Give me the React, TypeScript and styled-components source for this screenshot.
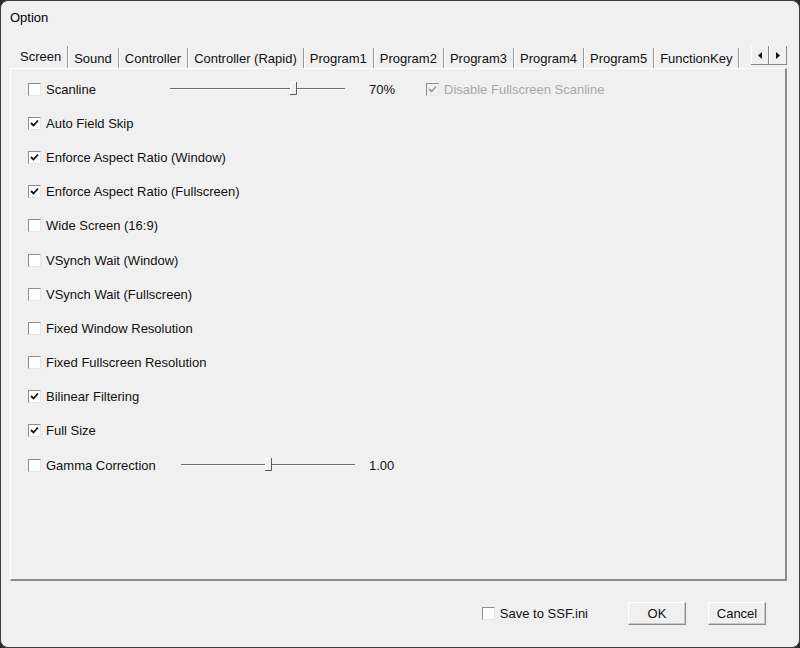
import styled, { createGlobalStyle } from "styled-components";

const GlobalStyle = createGlobalStyle`
  html, body {
    margin: 0;
    padding: 0;
    background: #2a2a2a;
  }
  * {
    box-sizing: border-box;
  }
`;

const Window = styled.div`
  width: 800px;
  height: 648px;
  background: #f0f0f0;
  border: 1px solid #3c3c3c;
  border-radius: 8px;
  display: flex;
  flex-direction: column;
  overflow: hidden;
  font-family: "Liberation Sans", Arial, sans-serif;
  font-size: 13px;
  color: #111;
`;

const TitleBar = styled.div`
  height: 33px;
  display: flex;
  align-items: center;
  padding-left: 9px;
  font-size: 13px;
  color: #000;
`;

const TabStrip = styled.div`
  height: 22px;
  margin-top: 12px;
  display: flex;
  align-items: flex-end;
  padding-left: 13px;
  padding-right: 12px;
`;

const Tab = styled.div<{ $active?: boolean }>`
  height: ${(p) => (p.$active ? "22px" : "20px")};
  padding: 0 6px;
  display: flex;
  align-items: center;
  padding-bottom: ${(p) => (p.$active ? "2px" : "0")};
  border-right: 1px solid #9a9a9a;
  box-shadow: 1px 0 0 #ffffff;
  white-space: nowrap;
  color: #111;
`;

const ScrollArrows = styled.div`
  margin-left: auto;
  display: flex;
  height: 19px;
  align-self: flex-start;
  border-bottom: 1px solid #8a8a8a;
`;

const ArrowButton = styled.div`
  width: 18px;
  height: 18px;
  display: flex;
  align-items: center;
  justify-content: center;
  border-right: 1px solid #8a8a8a;
  border-left: 1px solid #ffffff;
`;

const Panel = styled.div`
  margin: 0 12px 0 9px;
  height: 513px;
  border-left: 1px solid #ffffff;
  border-top: 1px solid #ffffff;
  border-right: 2px solid #8c8c8c;
  border-bottom: 2px solid #8c8c8c;
  padding: 3px 0 0 17px;
  display: flex;
  flex-direction: column;
`;

const Row = styled.div`
  height: 34.2px;
  display: flex;
  align-items: center;
`;

const OptionLabel = styled.div<{ $width?: number }>`
  display: flex;
  align-items: center;
  gap: 5px;
  width: ${(p) => (p.$width ? `${p.$width}px` : "auto")};
  flex-shrink: 0;
`;

const LabelText = styled.span<{ $disabled?: boolean }>`
  color: ${(p) => (p.$disabled ? "#a8a8a8" : "#111")};
  white-space: nowrap;
`;

const Box = styled.span<{ $disabled?: boolean }>`
  width: 13px;
  height: 13px;
  display: inline-flex;
  align-items: center;
  justify-content: center;
  border: 1px solid;
  border-color: #8e8e8e #e6e6e6 #e6e6e6 #8e8e8e;
  background: ${(p) => (p.$disabled ? "#f0f0f0" : "#ffffff")};
  flex-shrink: 0;
`;

const Track = styled.div<{ $width: number }>`
  position: relative;
  width: ${(p) => p.$width}px;
  height: 14px;
  flex-shrink: 0;
  &::before {
    content: "";
    position: absolute;
    left: 0;
    right: 0;
    top: 6px;
    height: 1px;
    background: #6f6f6f;
    box-shadow: 0 1px 0 #ffffff;
  }
`;

const Thumb = styled.svg`
  position: absolute;
  top: 0;
  margin-left: -3px;
`;

const Value = styled.span<{ $gap: number }>`
  margin-left: ${(p) => p.$gap}px;
  width: 57px;
  flex-shrink: 0;
  color: #111;
`;

const Footer = styled.div`
  flex: 1;
  display: flex;
  align-items: center;
  justify-content: flex-end;
  padding-right: 33px;
  padding-bottom: 1px;
`;

const SaveOption = styled(OptionLabel)`
  margin-right: 40px;
`;

const Button = styled.button`
  width: 58px;
  height: 23px;
  font-family: inherit;
  font-size: 13px;
  color: #111;
  background: #f0f0f0;
  border: 1px solid;
  border-color: #ffffff #8a8a8a #8a8a8a #ffffff;
  box-shadow: inset -1px -1px 0 #c9c9c9;
  padding: 0;
  & + & {
    margin-left: 22px;
  }
`;

function Checkbox({ checked, disabled }: { checked?: boolean; disabled?: boolean }) {
  return (
    <Box $disabled={disabled}>
      {checked && (
        <svg width="9" height="9" viewBox="0 0 9 9">
          <polyline
            points="1,4 3.5,6.5 8,1.5"
            fill="none"
            stroke={disabled ? "#a0a0a0" : "#111"}
            strokeWidth="1.8"
          />
        </svg>
      )}
    </Box>
  );
}

function Slider({ width, percent }: { width: number; percent: number }) {
  return (
    <Track $width={width}>
      <Thumb width="7" height="13" viewBox="0 0 7 13" style={{ left: `${(width * percent) / 100}px` }}>
        <rect x="0" y="0" width="7" height="13" fill="#f0f0f0" />
        <polyline points="0.5,12 0.5,0.5 6,0.5" fill="none" stroke="#ffffff" />
        <polyline points="6.5,0 6.5,12.5 0,12.5" fill="none" stroke="#5a5a5a" />
      </Thumb>
    </Track>
  );
}

const tabs = [
  "Screen",
  "Sound",
  "Controller",
  "Controller (Rapid)",
  "Program1",
  "Program2",
  "Program3",
  "Program4",
  "Program5",
  "FunctionKey",
];

const options: { label: string; checked: boolean }[] = [
  { label: "Auto Field Skip", checked: true },
  { label: "Enforce Aspect Ratio (Window)", checked: true },
  { label: "Enforce Aspect Ratio (Fullscreen)", checked: true },
  { label: "Wide Screen (16:9)", checked: false },
  { label: "VSynch Wait (Window)", checked: false },
  { label: "VSynch Wait (Fullscreen)", checked: false },
  { label: "Fixed Window Resolution", checked: false },
  { label: "Fixed Fullscreen Resolution", checked: false },
  { label: "Bilinear Filtering", checked: true },
  { label: "Full Size", checked: true },
];

export default function App() {
  return (
    <>
      <GlobalStyle />
      <Window>
        <TitleBar>Option</TitleBar>

        <TabStrip>
          {tabs.map((t, i) => (
            <Tab key={t} $active={i === 0}>
              {t}
            </Tab>
          ))}
          <ScrollArrows>
            <ArrowButton>
              <svg width="4" height="7" viewBox="0 0 4 7">
                <polygon points="4,0 0,3.5 4,7" fill="#111" />
              </svg>
            </ArrowButton>
            <ArrowButton>
              <svg width="4" height="7" viewBox="0 0 4 7">
                <polygon points="0,0 4,3.5 0,7" fill="#111" />
              </svg>
            </ArrowButton>
          </ScrollArrows>
        </TabStrip>

        <Panel>
          <Row>
            <OptionLabel $width={142}>
              <Checkbox />
              <LabelText>Scanline</LabelText>
            </OptionLabel>
            <Slider width={175} percent={70} />
            <Value $gap={24}>70%</Value>
            <OptionLabel>
              <Checkbox checked disabled />
              <LabelText $disabled>Disable Fullscreen Scanline</LabelText>
            </OptionLabel>
          </Row>

          {options.map((o) => (
            <Row key={o.label}>
              <OptionLabel>
                <Checkbox checked={o.checked} />
                <LabelText>{o.label}</LabelText>
              </OptionLabel>
            </Row>
          ))}

          <Row>
            <OptionLabel $width={153}>
              <Checkbox />
              <LabelText>Gamma Correction</LabelText>
            </OptionLabel>
            <Slider width={174} percent={50} />
            <Value $gap={14}>1.00</Value>
          </Row>
        </Panel>

        <Footer>
          <SaveOption>
            <Checkbox />
            <LabelText>Save to SSF.ini</LabelText>
          </SaveOption>
          <Button>OK</Button>
          <Button>Cancel</Button>
        </Footer>
      </Window>
    </>
  );
}
